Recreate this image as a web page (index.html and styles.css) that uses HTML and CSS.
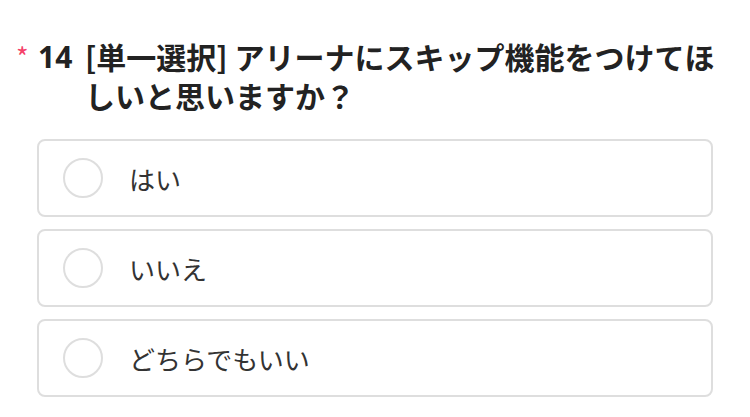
FILE: index.html
```html
<!DOCTYPE html>
<html lang="ja">
<head>
<meta charset="utf-8">
<link rel="stylesheet" href="styles.css">
</head>
<body>
<div class="question">
  <div class="title">
    <span class="req">*</span>
    <span class="num">14</span>
    <span class="text">[単一選択] アリーナにスキップ機能をつけてほしいと思いますか？</span>
  </div>
  <div class="options">
    <label class="option"><span class="radio"></span><span class="label">はい</span></label>
    <label class="option"><span class="radio"></span><span class="label">いいえ</span></label>
    <label class="option"><span class="radio"></span><span class="label">どちらでもいい</span></label>
  </div>
</div>
</body>
</html>
```
FILE: styles.css
```css
html, body {
  margin: 0;
  padding: 0;
  background: #fff;
}
body {
  font-family: "Noto Sans CJK JP", "Noto Sans", sans-serif;
  color: #222;
}
.question {
  padding: 37px 26px 0 16px;
}
.title {
  display: flex;
  align-items: flex-start;
  font-size: 30px;
  font-weight: 700;
  line-height: 39px;
  color: #222;
}
.req {
  color: #f5426a;
  font-size: 27px;
  font-weight: 400;
  width: 22px;
  flex: none;
}
.num {
  flex: none;
  width: 47px;
  font-family: "Noto Sans", sans-serif;
}
.text {
  flex: 1;
  font-family: "Noto Sans CJK JP", sans-serif;
}
.options {
  margin: 24px 11px 0 21px;
  display: flex;
  flex-direction: column;
  gap: 12px;
}
.option {
  display: flex;
  align-items: center;
  height: 74px;
  border: 2px solid #dedede;
  border-radius: 8px;
  padding-left: 24px;
}
.radio {
  width: 36px;
  height: 36px;
  border: 2px solid #dedede;
  border-radius: 50%;
  flex: none;
}
.label {
  margin-left: 26px;
  font-size: 26px;
  color: #333;
}
```
